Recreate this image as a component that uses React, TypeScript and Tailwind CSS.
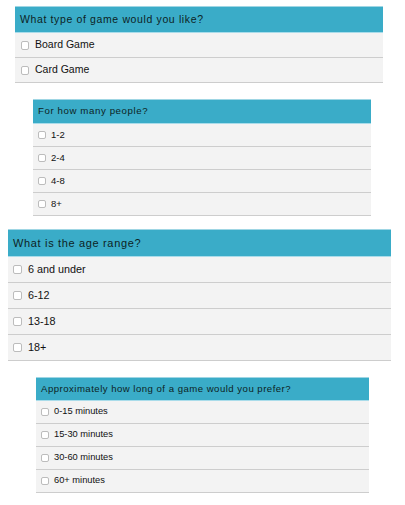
import React from 'react';

type Section = {
  title: string;
  options: string[];
  wrap: string;
  head: string;
  row: string;
  box: string;
};

// Four question blocks, each drawn at its own scale like the screenshot
const sections: Section[] = [
  {
    title: 'What type of game would you like?',
    options: ['Board Game', 'Card Game'],
    wrap: 'ml-[15px] w-[368px] mt-[6px]',
    head: 'h-[27px] text-[10.5px] tracking-[0.06em]',
    row: 'h-[25px] text-[10.5px] pl-[6px] gap-[6px]',
    box: 'w-[8px] h-[9px]',
  },
  {
    title: 'For how many people?',
    options: ['1-2', '2-4', '4-8', '8+'],
    wrap: 'ml-[33px] w-[338px] mt-[16px]',
    head: 'h-[25px] text-[9.7px] tracking-[0.06em]',
    row: 'h-[23px] text-[9.5px] pl-[5px] gap-[5px]',
    box: 'w-[8px] h-[8px]',
  },
  {
    title: 'What is the age range?',
    options: ['6 and under', '6-12', '13-18', '18+'],
    wrap: 'ml-[8px] w-[383px] mt-[13px]',
    head: 'h-[28px] text-[11px] tracking-[0.06em]',
    row: 'h-[26px] text-[10.8px] pl-[5px] gap-[6px]',
    box: 'w-[9px] h-[9px]',
  },
  {
    title: 'Approximately how long of a game would you prefer?',
    options: ['0-15 minutes', '15-30 minutes', '30-60 minutes', '60+ minutes'],
    wrap: 'ml-[36px] w-[333px] mt-[16px]',
    head: 'h-[24px] text-[9.6px] tracking-[0.05em]',
    row: 'h-[23px] text-[9.3px] pl-[5px] gap-[5px]',
    box: 'w-[8px] h-[8px]',
  },
];

function Question({ s }: { s: Section }) {
  return (
    <div className={s.wrap}>
      <div
        className={`flex items-center px-[5px] bg-[#3aacc8] border-t border-b border-t-[#9fd6e4] border-b-[#a9dcea] text-[#0d1f24] ${s.head}`}
      >
        {s.title}
      </div>
      {s.options.map((o) => (
        <div
          key={o}
          className={`flex items-center bg-[#f3f3f3] border-b border-[#cdcdcd] text-[#111] ${s.row}`}
        >
          <span className={`shrink-0 rounded-[2px] border border-[#bcbcbc] bg-white ${s.box}`} />
          <span>{o}</span>
        </div>
      ))}
    </div>
  );
}

export default function App() {
  return (
    <div className="w-[405px] h-[505px] bg-white overflow-hidden font-['Liberation_Sans',Arial,sans-serif]">
      {sections.map((s) => (
        <Question key={s.title} s={s} />
      ))}
    </div>
  );
}
